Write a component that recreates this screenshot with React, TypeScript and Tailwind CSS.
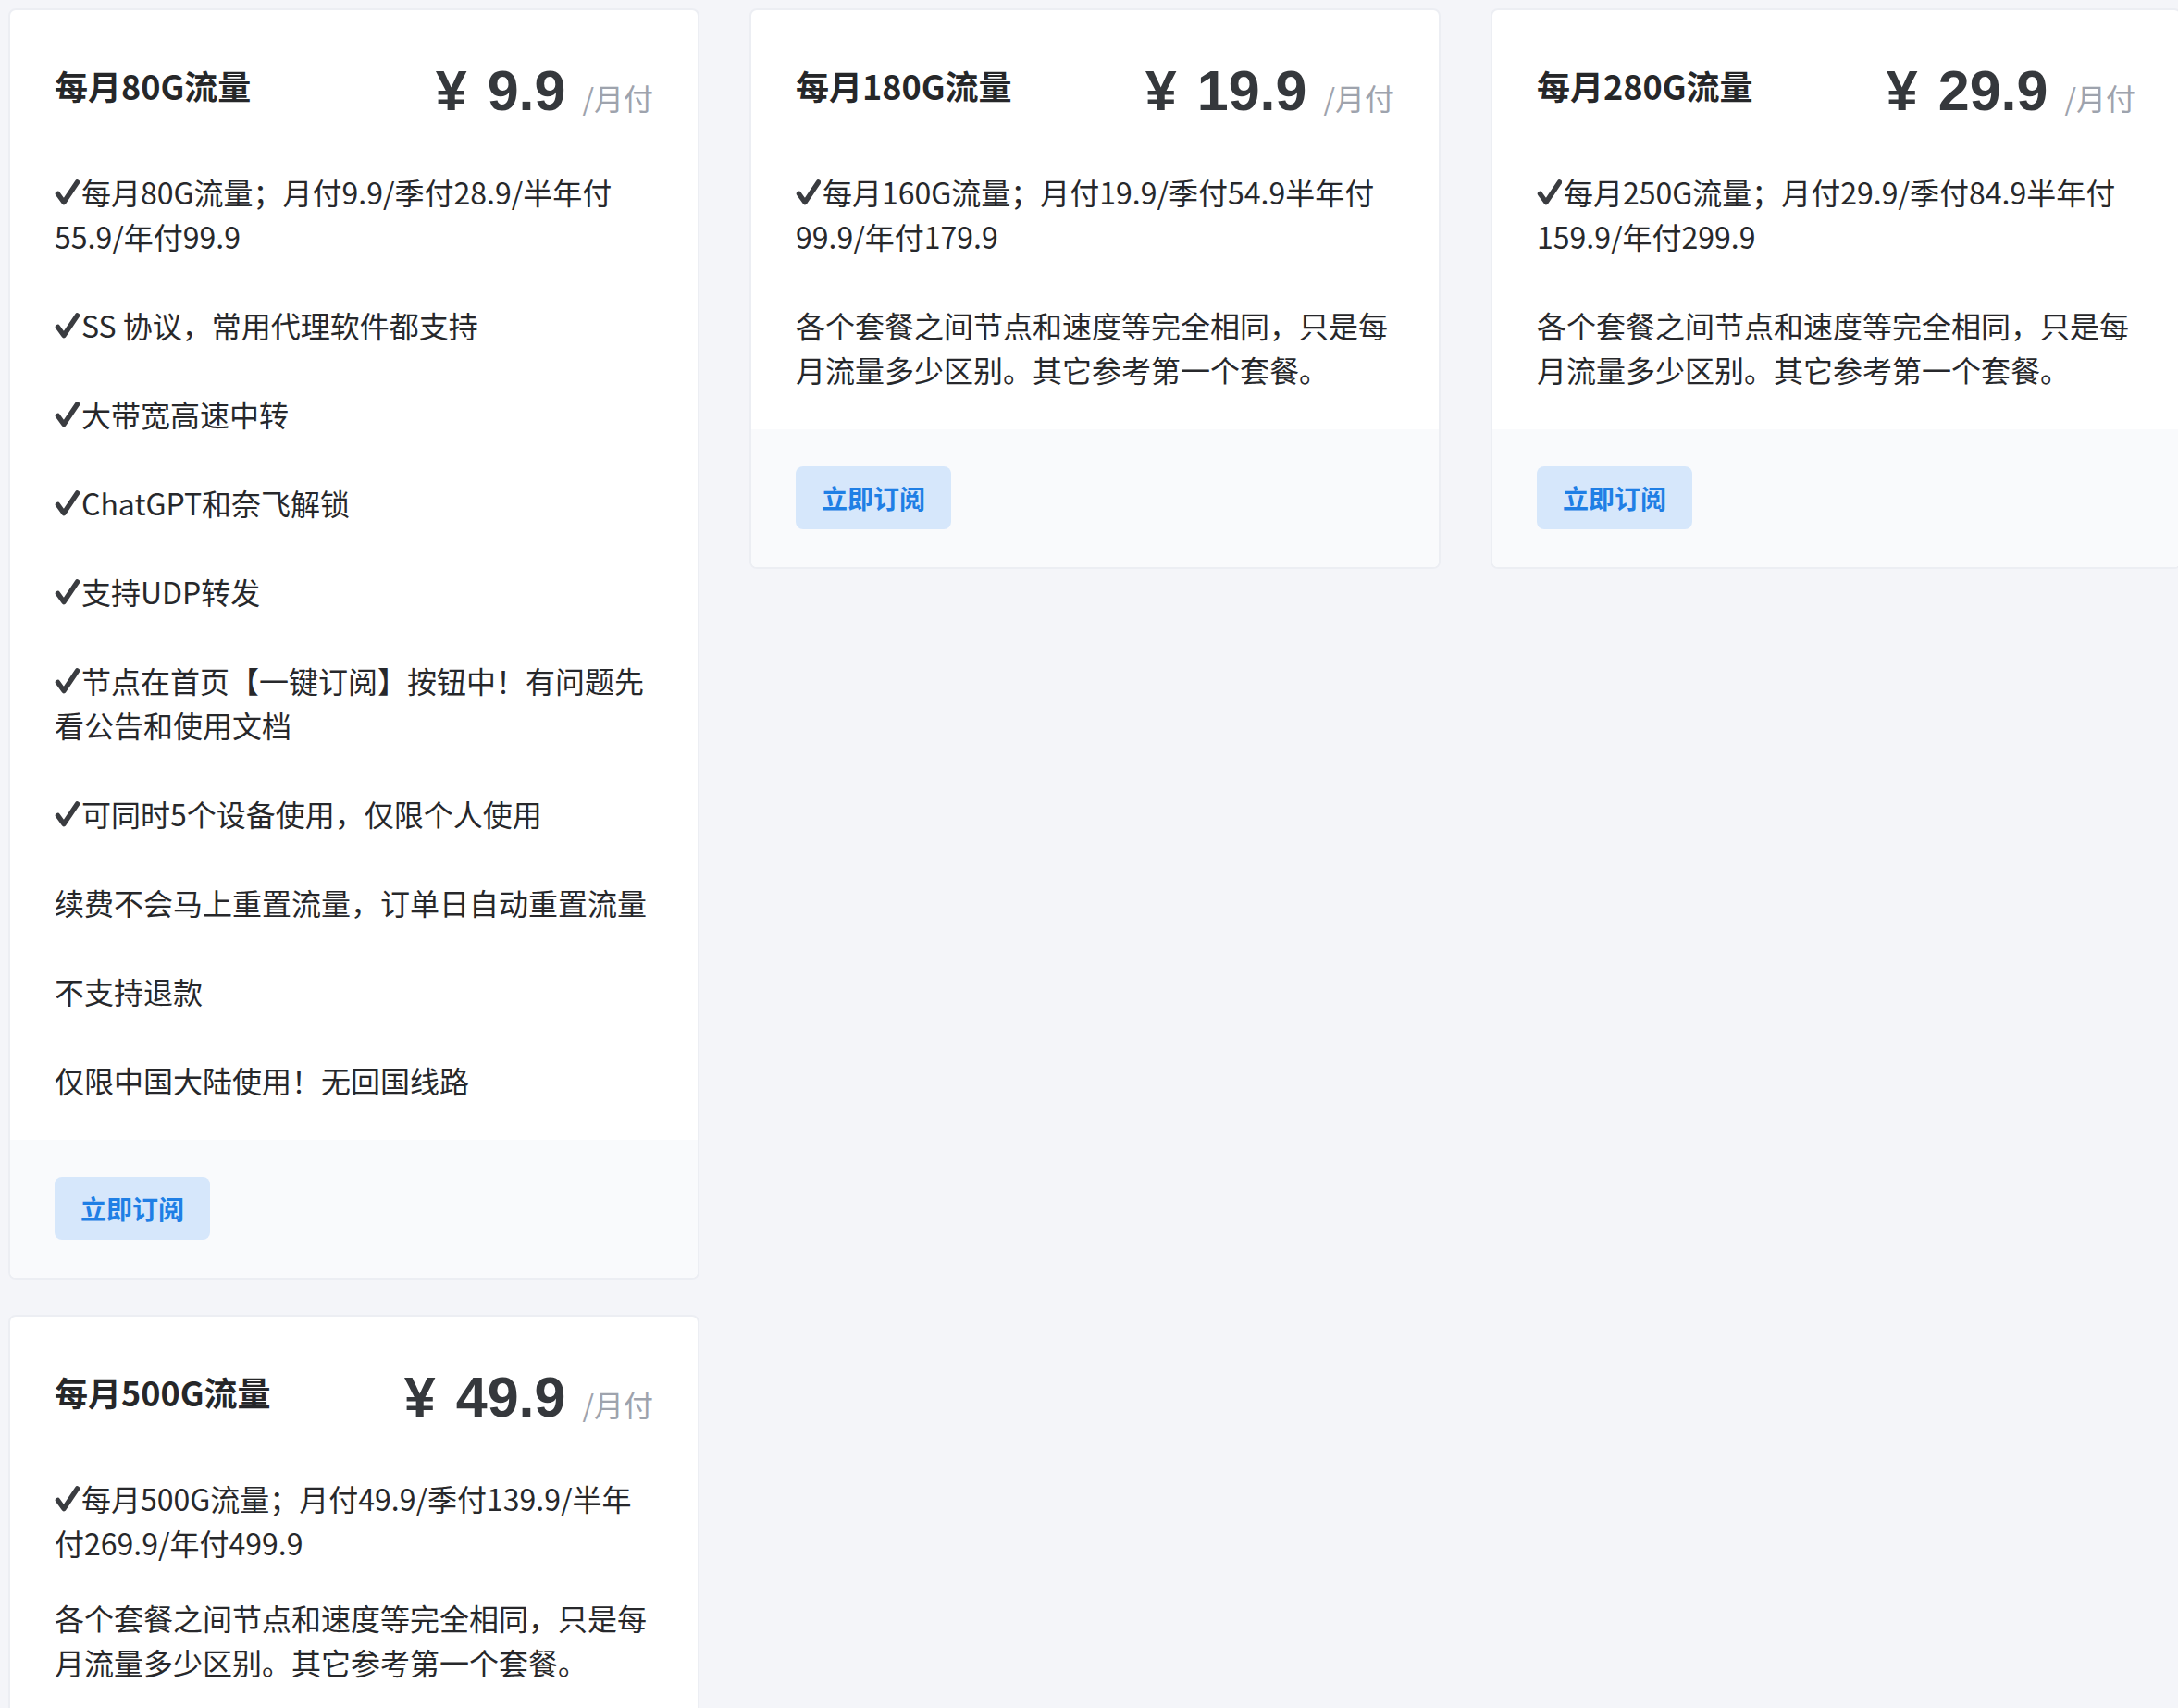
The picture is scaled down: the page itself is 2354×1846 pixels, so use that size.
import React from 'react';

type Plan = {
  title: string;
  price: string;
  tight?: boolean;
  features: { check?: boolean; text: string }[];
};

const plans: Plan[] = [
  {
    title: '每月80G流量',
    price: '9.9',
    features: [
      { check: true, text: '每月80G流量；月付9.9/季付28.9/半年付55.9/年付99.9' },
      { check: true, text: 'SS 协议，常用代理软件都支持' },
      { check: true, text: '大带宽高速中转' },
      { check: true, text: 'ChatGPT和奈飞解锁' },
      { check: true, text: '支持UDP转发' },
      { check: true, text: '节点在首页【一键订阅】按钮中！有问题先看公告和使用文档' },
      { check: true, text: '可同时5个设备使用，仅限个人使用' },
      { text: '续费不会马上重置流量，订单日自动重置流量' },
      { text: '不支持退款' },
      { text: '仅限中国大陆使用！无回国线路' },
    ],
  },
  {
    title: '每月180G流量',
    price: '19.9',
    features: [
      { check: true, text: '每月160G流量；月付19.9/季付54.9半年付99.9/年付179.9' },
      { text: '各个套餐之间节点和速度等完全相同，只是每月流量多少区别。其它参考第一个套餐。' },
    ],
  },
  {
    title: '每月280G流量',
    price: '29.9',
    features: [
      { check: true, text: '每月250G流量；月付29.9/季付84.9半年付159.9/年付299.9' },
      { text: '各个套餐之间节点和速度等完全相同，只是每月流量多少区别。其它参考第一个套餐。' },
    ],
  },
  {
    title: '每月500G流量',
    price: '49.9',
    tight: true,
    features: [
      { check: true, text: '每月500G流量；月付49.9/季付139.9/半年付269.9/年付499.9' },
      { text: '各个套餐之间节点和速度等完全相同，只是每月流量多少区别。其它参考第一个套餐。' },
    ],
  },
];

function Check() {
  return (
    <svg
      className="inline-block align-top mt-[11px] mr-[2px]"
      width="27"
      height="28"
      viewBox="0 0 27 28"
      fill="none"
    >
      <path
        d="M3.5 15.5 L10 24.5 L24.5 3"
        stroke="#3a3c40"
        strokeWidth="5.5"
        strokeLinecap="round"
        strokeLinejoin="round"
      />
    </svg>
  );
}

function PlanCard({ plan }: { plan: Plan }) {
  return (
    <div className="flex flex-col bg-white border-2 border-[#eceef3] rounded-lg overflow-hidden">
      <div className="px-[48px] pt-[48px] pb-[41px]">
        <div className="flex items-center justify-between h-[72px]">
          <h3 className="pb-[6px] text-[36px] leading-[48px] font-bold text-[#262729]">{plan.title}</h3>
          <div className="flex items-baseline pt-[6px]">
            <span className="font-['Liberation_Sans',sans-serif] text-[61px] leading-[72px] font-bold text-[#35383c]">
              ¥
            </span>
            <span className="ml-[22px] font-['Liberation_Sans',sans-serif] text-[61px] leading-[72px] font-bold text-[#35383c]">
              {plan.price}
            </span>
            <span className="ml-[18px] text-[32px] text-[#9ea3ad]">/月付</span>
          </div>
        </div>
        <div className={plan.tight ? 'mt-[52px] flex flex-col gap-[33px]' : 'mt-[52px] flex flex-col gap-[48px]'}>
          {plan.features.map((f, i) => (
            <p key={i} className="text-[32px] leading-[48px] text-[#27282b]">
              {f.check && <Check />}
              {f.text}
            </p>
          ))}
        </div>
      </div>
      <div className="bg-[#f9fafc] px-[48px] pt-[40px] pb-[41px]">
        <button className="h-[68px] px-[28px] rounded-lg bg-[#d6e7fb] text-[#1f7fe5] text-[28px] font-semibold leading-[40px]">
          立即订阅
        </button>
      </div>
    </div>
  );
}

export default function App() {
  return (
    <div className="h-screen w-screen overflow-hidden bg-[#f4f5f9] font-['Noto_Sans_CJK_SC',sans-serif]">
      <div className="grid grid-cols-[747px_747px_747px] gap-x-[54px] gap-y-[38px] items-start pt-[9px] pl-[9px]">
        {plans.map((p) => (
          <PlanCard key={p.title} plan={p} />
        ))}
      </div>
    </div>
  );
}
